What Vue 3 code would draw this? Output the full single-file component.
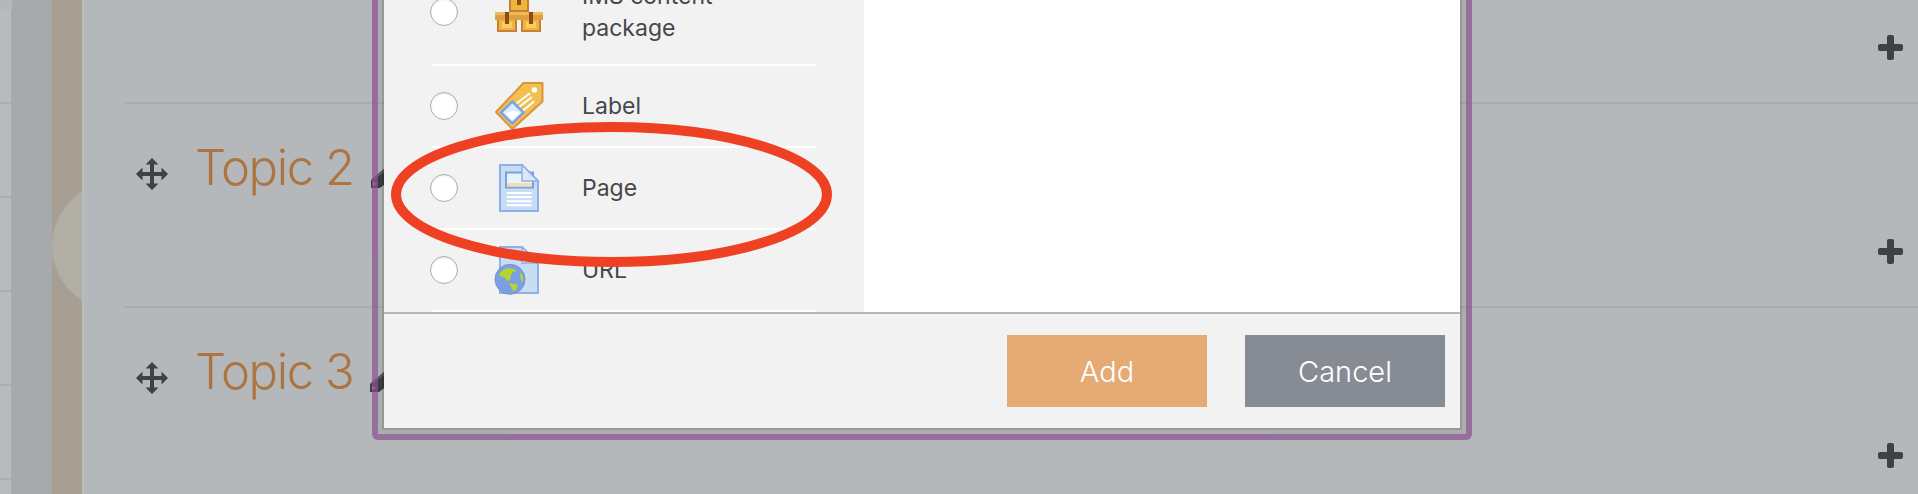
<script setup>
const topics = [
  { id: 1, name: '' },
  { id: 2, name: 'Topic 2' },
  { id: 3, name: 'Topic 3' }
]

const activities = [
  { id: 'ims', lines: ['IMS content', 'package'], tall: true },
  { id: 'label', lines: ['Label'] },
  { id: 'page', lines: ['Page'] },
  { id: 'url', lines: ['URL'] }
]
</script>

<template>
  <div class="page">
    <aside class="sidebar">
      <div class="cells">
        <div v-for="n in 6" :key="n" class="cell"></div>
      </div>
      <div class="shade"></div>
      <div class="tan"><div class="blob"></div></div>
      <div class="edge"></div>
    </aside>

    <main class="topics">
      <section v-for="t in topics" :key="t.id" class="topic">
        <div class="topic-head">
          <template v-if="t.name">
            <svg class="move" viewBox="0 0 32 32" width="32" height="32">
              <path d="M14 6h4v8h8v4h-8v8h-4v-8H6v-4h8z" fill="#3d4246" />
              <path d="M16 0l6.500 6.500h-13zM16 32l-6.500-6.500h13zM0 16l6.500-6.500v13zM32 16l-6.500 6.500v-13z" fill="#3d4246" />
            </svg>
            <h3 class="topic-name">{{ t.name }}</h3>
            <svg class="pencil" viewBox="0 0 18 21" width="18" height="21">
              <path d="M0 21v-8L15 0h3v14l-9 7z" fill="#3d3f44" />
              <path d="M2 19v-5l4 3z" fill="#b587bd" />
              <path d="M3 12L15 2" stroke="#6b6d72" stroke-width="1.200" />
            </svg>
          </template>
        </div>
        <svg class="plus" viewBox="0 0 25 25" width="25" height="25">
          <rect x="9" y="0" width="7" height="25" rx="2" fill="#3d4246" />
          <rect x="0" y="9" width="25" height="7" rx="2" fill="#3d4246" />
        </svg>
      </section>
    </main>

    <div class="modal">
      <div class="modal-frame">
        <div class="modal-inner">
          <div class="modal-body">
            <div class="list">
              <label v-for="a in activities" :key="a.id" class="row" :class="{ tall: a.tall }">
                <input class="radio" type="radio" name="activity" />

                <svg v-if="a.id === 'ims'" class="icon" viewBox="0 0 50 50" width="50" height="50">
                  <rect x="15" y="13" width="20" height="12" fill="#c47f3b" />
                  <rect x="17" y="13" width="16" height="10" fill="#f0b53a" />
                  <rect x="23" y="5" width="4" height="13" fill="#8a4d16" />
                  <g v-for="x in [0, 24]" :key="x" :transform="`translate(${x} 0)`">
                    <rect x="3" y="33" width="20" height="12" fill="#c47f3b" />
                    <rect x="5" y="33" width="16" height="10" fill="#f0b53a" />
                    <rect x="8" y="35" width="10" height="6" fill="#f6cd60" />
                    <rect x="1" y="25" width="24" height="8" fill="#dd9f42" />
                    <rect x="1" y="25" width="24" height="3" fill="#efbb58" />
                    <rect x="11" y="25" width="4" height="12" fill="#8a4d16" />
                  </g>
                </svg>

                <svg v-else-if="a.id === 'label'" class="icon" viewBox="0 0 50 50" width="50" height="50">
                  <path d="M29.500 2H48.500V20.500L18.300 48 2 31z" fill="#f3bf51" stroke="#d8963c" stroke-width="2" stroke-linejoin="round" />
                  <circle cx="40.300" cy="9" r="2.800" fill="#fff" />
                  <path d="M22.700 22.300L36 12.300M25 26L38 16M28.500 30L40 20.500" stroke="#fff" stroke-width="2" />
                  <path d="M18.300 20.500L29.500 31.500 18.300 42.500 7 31.500z" fill="#dcebfb" stroke="#7ba4e6" stroke-width="2.500" />
                  <path d="M11 32.500l8-3 7 2.500-7.500 7.500z" fill="#fff" />
                </svg>

                <svg v-else-if="a.id === 'page'" class="icon" viewBox="0 0 50 50" width="50" height="50">
                  <path d="M6 2H28L44 18V48H6z" fill="#c7ddf4" stroke="#8eb0ea" stroke-width="2" />
                  <rect x="12" y="9.500" width="27" height="15" fill="#e8f3fb" stroke="#7c9ee2" stroke-width="2" />
                  <rect x="13" y="20" width="25" height="3.500" fill="#f0dfb0" />
                  <path d="M28 2L44 18H28z" fill="#dbe8f8" stroke="#8eb0ea" stroke-width="1.500" />
                  <path d="M12.700 30h25M12.700 34h25M12.700 38.300h25M12.700 42.300h25" stroke="#fff" stroke-width="2" />
                </svg>

                <svg v-else class="icon" viewBox="0 0 50 50" width="50" height="50">
                  <path d="M6 2H28L44 18V48H6z" fill="#c7ddf4" stroke="#8eb0ea" stroke-width="2" />
                  <path d="M28 2L44 18H28z" fill="#dbe8f8" stroke="#8eb0ea" stroke-width="1.500" />
                  <circle cx="16" cy="34.300" r="15" fill="#7b9fe0" stroke="#7593d0" stroke-width="1" />
                  <path d="M5 29l4-4 5-2 6 1 3 2-4 1-2 3-1 5-3 1-2-3-5-2zM15 38l6 1 3 1-2 5-3 1-2-4zM27 27l2 4v6l-2-1-1-5z" fill="#b3d435" />
                </svg>

                <span class="row-text">
                  <span v-for="l in a.lines" :key="l">{{ l }}</span>
                </span>
              </label>
            </div>
            <div class="preview"></div>
          </div>
          <footer class="modal-footer">
            <button class="btn add" type="button">Add</button>
            <button class="btn cancel" type="button">Cancel</button>
          </footer>
        </div>
      </div>
    </div>

    <svg class="callout" viewBox="0 0 1918 494" width="1918" height="494">
      <ellipse cx="611.500" cy="194.500" rx="215.500" ry="67.500" fill="none" stroke="#ee4124" stroke-width="10" />
    </svg>
  </div>
</template>

<style scoped>
.page { position: relative; display: flex; width: 1918px; height: 494px; overflow: hidden; background: #b4b8bb; font-family: Inter, "Liberation Sans", sans-serif; }

.sidebar { display: flex; flex: 0 0 124px; height: 494px; }
.cells { width: 12px; margin-top: 10px; border-right: 1px solid #a7abad; box-sizing: border-box; background: #b5bbbf; }
.cell { height: 94px; border-bottom: 2px solid #a9adaf; box-sizing: border-box; }
.shade { width: 40px; background: #a6aaab; }
.tan { position: relative; width: 30px; overflow: hidden; background: #a79f93; }
.blob { position: absolute; left: 0; top: 182px; width: 128px; height: 128px; border-radius: 50%; background: #b1aea5; }
.edge { width: 2px; background: #b7bcbe; }

.topics { flex: 1; margin-top: -100px; }
.topic { display: flex; height: 204px; box-sizing: border-box; border-bottom: 2px solid #a9adb0; }
.topic-head { display: flex; align-items: flex-start; padding: 54px 0 0 12px; }
.topic-name { margin: -19px 0 0 27px; font-size: 49px; line-height: 58px; font-weight: 300; letter-spacing: -1.400px; color: #ad7442; }
.pencil { margin: 9px 0 0 17px; }
.plus { margin: auto 15px 0 auto; transform: translateY(-42px); }

.modal { position: absolute; left: 372px; top: -20px; width: 1100px; height: 460px; box-sizing: border-box; border: 6px solid rgba(139, 80, 142, 0.7); border-top: 0; border-radius: 0 0 6px 6px; }
.modal-frame { height: 100%; box-sizing: border-box; border: 4px solid rgba(0, 0, 0, 0.05); border-top: 0; }
.modal-inner { display: flex; flex-direction: column; height: 100%; box-sizing: border-box; border: 2px solid rgba(0, 0, 0, 0.17); border-top: 0; }

.modal-body { display: flex; flex: 1; min-height: 0; overflow: hidden; background: #fff; }
.list { flex: 0 0 480px; box-sizing: border-box; padding: 0 48px; background: #f2f2f2; overflow: hidden; }
.row { display: flex; align-items: center; height: 82px; box-sizing: border-box; border-bottom: 2px solid #fff; }
.row.tall { height: 106px; margin-top: -20px; }
.radio { appearance: none; width: 28px; height: 28px; margin: 0 0 0 -2px; flex: none; border: 1.500px solid #adadad; border-radius: 50%; background: #fff; box-shadow: inset 0 1px 2px rgba(0, 0, 0, 0.1); }
.icon { flex: none; margin-left: 36px; }
.row-text { display: flex; flex-direction: column; margin-left: 38px; font-size: 23px; line-height: 32px; color: #45474a; }
.preview { flex: 1; }

.modal-footer { display: flex; justify-content: flex-end; align-items: center; gap: 38px; flex: 0 0 116px; box-sizing: border-box; padding-right: 15px; border-top: 2px solid #b5b5b5; background: #f2f2f2; }
.btn { width: 200px; height: 72px; border: 0; font-family: inherit; font-size: 29px; font-weight: 300; color: #fff; }
.add { background: #e6aa75; }
.cancel { background: #878c94; }

.callout { position: absolute; left: 0; top: 0; pointer-events: none; }
</style>
